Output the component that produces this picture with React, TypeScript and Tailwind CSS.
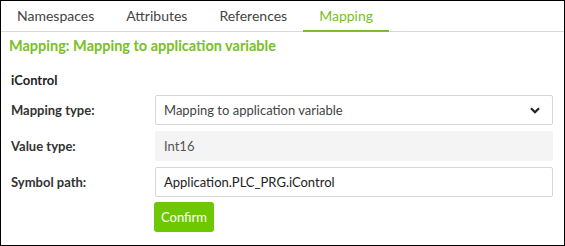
import { useState } from "react";

const tabs = ["Namespaces", "Attributes", "References", "Mapping"];

function Row({ label, children }: { label: string; children: React.ReactNode }) {
  return (
    <div className="flex items-center">
      <div className="w-[144px] shrink-0 text-[13px] font-bold text-[#333]">{label}</div>
      <div className="flex-1">{children}</div>
    </div>
  );
}

export default function App() {
  const [active, setActive] = useState("Mapping");
  const [path, setPath] = useState("Application.PLC_PRG.iControl");

  return (
    <div
      className="w-[565px] h-[246px] border border-black bg-white text-[#333]"
      style={{ fontFamily: 'Lato, "Open Sans", sans-serif' }}
    >
      <div className="flex h-[31px] border-b border-[#d9d9d9]">
        {tabs.map((t) => (
          <button
            key={t}
            onClick={() => setActive(t)}
            className={`px-4 text-[14px] leading-none -mb-px ${
              active === t ? "text-[#78c027] border-b-2 border-[#78c027]" : "text-[#444] border-b-2 border-transparent"
            }`}
          >
            {t}
          </button>
        ))}
      </div>

      <div className="pl-[8px] pt-[3px] text-[14.5px] font-bold text-[#78c027]">
        Mapping: Mapping to application variable
      </div>

      <div className="pl-[10px] pr-[11px]">
        <div className="pt-[14px] pb-[5px] text-[13px] font-bold text-[#222]">iControl</div>

        <div className="flex flex-col gap-[6px]">
          <Row label="Mapping type:">
            <div className="flex h-[30px] items-center justify-between rounded-[2px] border border-[#d7d7d7] px-[8px] text-[13px] text-[#444]">
              <span>Mapping to application variable</span>
              <svg width="10" height="7" viewBox="0 0 10 7" className="mr-[4px]">
                <path d="M1 1.2 L5 5.2 L9 1.2" fill="none" stroke="#222" strokeWidth="2.2" />
              </svg>
            </div>
          </Row>
          <Row label="Value type:">
            <div className="flex h-[30px] items-center rounded-[2px] bg-[#f4f4f4] px-[9px] text-[13px] text-[#555]">
              Int16
            </div>
          </Row>
          <Row label="Symbol path:">
            <input
              value={path}
              onChange={(e) => setPath(e.target.value)}
              className="h-[30px] w-full rounded-[2px] border border-[#d7d7d7] px-[8px] text-[13px] text-[#222] outline-none"
            />
          </Row>
        </div>

        <div className="pl-[143px] pt-[5px]">
          <button className="h-[30px] rounded-[3px] bg-[#6dc800] px-[7px] text-[13px] text-white">Confirm</button>
        </div>
      </div>
    </div>
  );
}
